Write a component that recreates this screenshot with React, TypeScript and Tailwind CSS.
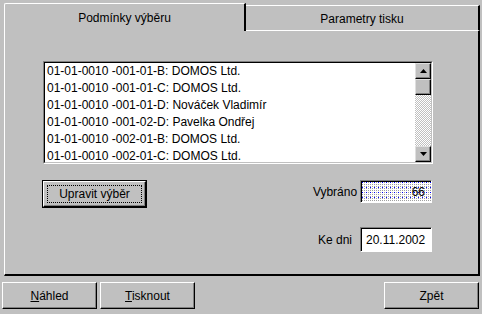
import React from "react";

const rows = [
  "01-01-0010 -001-01-B: DOMOS Ltd.",
  "01-01-0010 -001-01-C: DOMOS Ltd.",
  "01-01-0010 -001-01-D: Nováček Vladimír",
  "01-01-0010 -001-02-D: Pavelka Ondřej",
  "01-01-0010 -002-01-B: DOMOS Ltd.",
  "01-01-0010 -002-01-C: DOMOS Ltd.",
];

function Arrow({ down }: { down?: boolean }) {
  return (
    <svg width="7" height="4" viewBox="0 0 7 4" className={down ? "rotate-180" : ""}>
      <path d="M3.5 0 L7 4 L0 4 Z" fill="#000" />
    </svg>
  );
}

function WinButton({ children, className = "" }: { children: React.ReactNode; className?: string }) {
  return (
    <button
      className={`h-[27px] w-[95px] flex items-center justify-center border-t border-l border-white border-r border-b border-r-black border-b-black shadow-[inset_-1px_-1px_0_#808080] bg-[#c0c0c0] ${className}`}
    >
      {children}
    </button>
  );
}

export default function App() {
  return (
    <div className="w-[482px] h-[314px] bg-[#c0c0c0] text-black text-[12px] font-['Liberation_Sans',Arial,sans-serif] flex flex-col overflow-hidden">
      {/* tabs */}
      <div className="flex items-end h-[31px] pl-1 pr-[2px]">
        <div className="w-[242px] h-[28px] border-t border-l border-white border-r-2 border-r-black rounded-tl-[2px] flex items-center justify-center">
          Podmínky výběru
        </div>
        <div className="flex-1 h-[26px] border-t border-b border-white border-r-2 border-r-black flex items-center justify-center pt-[1px]">
          Parametry tisku
        </div>
      </div>

      {/* panel */}
      <div className="ml-1 mr-[2px] h-[245px] border-l border-white border-r-2 border-b-2 border-r-black border-b-black pl-[38px] pt-[30px]">
        <div className="w-[390px] h-[103px] flex border-t border-l border-[#808080] border-r border-b border-r-white border-b-white">
          <div className="flex flex-1 border-t border-l border-black border-r border-b border-r-[#c0c0c0] border-b-[#c0c0c0]">
            <div className="flex-1 bg-white overflow-hidden pl-[2px]">
              {rows.map((r) => (
                <div key={r} className="leading-[17px] whitespace-nowrap">
                  {r}
                </div>
              ))}
            </div>
            <div className="w-[16px] flex flex-col">
              <div className="h-[16px] flex items-center justify-center border-t border-l border-[#dfdfdf] border-r border-b border-r-black border-b-black shadow-[inset_-1px_-1px_0_#808080] bg-[#c0c0c0]">
                <Arrow />
              </div>
              <div className="h-[16px] border-t border-l border-[#dfdfdf] border-r border-b border-r-black border-b-black shadow-[inset_-1px_-1px_0_#808080] bg-[#c0c0c0]" />
              <div className="flex-1 bg-[image:repeating-conic-gradient(#c0c0c0_0_25%,#ffffff_0_50%)] bg-[length:2px_2px]" />
              <div className="h-[16px] flex items-center justify-center border-t border-l border-[#dfdfdf] border-r border-b border-r-black border-b-black shadow-[inset_-1px_-1px_0_#808080] bg-[#c0c0c0]">
                <Arrow down />
              </div>
            </div>
          </div>
        </div>

        <div className="w-[390px] flex justify-between mt-[16px]">
          <div className="-ml-[1px] w-[105px] h-[28px] border border-black">
            <div className="w-full h-full p-[3px] border-t border-l border-white border-r border-b border-r-black border-b-black shadow-[inset_-1px_-1px_0_#808080]">
              <div className="w-full h-full border border-dotted border-black flex items-center justify-center">
                Upravit výběr
              </div>
            </div>
          </div>

          <div className="flex flex-col items-end gap-[24px] pr-[1px]">
            <div className="flex items-center">
              <span className="w-[48px] text-center mr-[1px]">Vybráno</span>
              <div className="w-[72px] h-[23px] border-t border-l border-[#808080] border-r border-b border-r-white border-b-white">
                <div className="h-full border-t border-l border-black bg-white bg-[image:conic-gradient(at_1px_1px,transparent_270deg,#0000ff_0),conic-gradient(at_1px_1px,transparent_270deg,#a0a0a0_0)] bg-[length:4px_5px,2px_2px] flex items-center justify-end pr-[6px]">
                  66
                </div>
              </div>
            </div>
            <div className="flex items-center">
              <span className="w-[48px] text-center mr-[1px]">Ke dni</span>
              <div className="w-[72px] h-[25px] border-t border-l border-[#808080] border-r border-b border-r-white border-b-white">
                <div className="h-full border-t border-l border-black bg-white flex items-center pl-[4px]">
                  20.11.2002
                </div>
              </div>
            </div>
          </div>
        </div>
      </div>

      {/* bottom buttons */}
      <div className="flex mt-[6px] pl-[2px] pr-[3px]">
        <WinButton>
          <span>
            <span className="underline">N</span>áhled
          </span>
        </WinButton>
        <WinButton className="ml-[3px]">
          <span>
            <span className="underline">T</span>isknout
          </span>
        </WinButton>
        <WinButton className="ml-auto">Zpět</WinButton>
      </div>
    </div>
  );
}
